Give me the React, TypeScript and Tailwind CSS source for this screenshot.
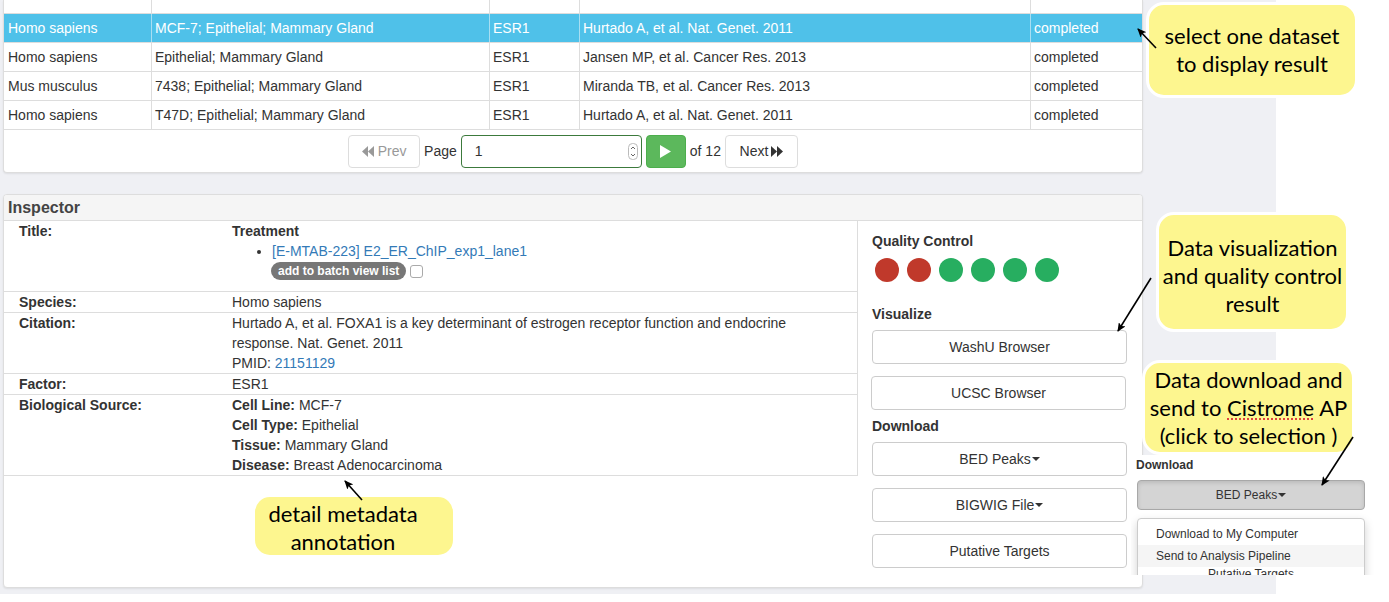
import React from "react";

type Row = { cells: string[]; selected?: boolean };

const rows: Row[] = [
  { cells: ["Homo sapiens", "MCF-7; Epithelial; Mammary Gland", "ESR1", "Hurtado A, et al. Nat. Genet. 2011", "completed"], selected: true },
  { cells: ["Homo sapiens", "Epithelial; Mammary Gland", "ESR1", "Jansen MP, et al. Cancer Res. 2013", "completed"] },
  { cells: ["Mus musculus", "7438; Epithelial; Mammary Gland", "ESR1", "Miranda TB, et al. Cancer Res. 2013", "completed"] },
  { cells: ["Homo sapiens", "T47D; Epithelial; Mammary Gland", "ESR1", "Hurtado A, et al. Nat. Genet. 2011", "completed"] },
];

const gridCols = "grid grid-cols-[147px_338px_90px_451px_112px]";

function Caret() {
  return (
    <span className="inline-block w-0 h-0 ml-[1px] align-middle border-x-[4px] border-x-transparent border-t-[4px] border-t-[#333]" />
  );
}

function Backward({ color }: { color: string }) {
  return (
    <svg width="12" height="11" viewBox="0 0 12 11" className="inline-block">
      <polygon points="6,0 0,5.5 6,11" fill={color} />
      <polygon points="12,0 6,5.5 12,11" fill={color} />
    </svg>
  );
}

function Forward({ color }: { color: string }) {
  return (
    <svg width="12" height="11" viewBox="0 0 12 11" className="inline-block">
      <polygon points="0,0 6,5.5 0,11" fill={color} />
      <polygon points="6,0 12,5.5 6,11" fill={color} />
    </svg>
  );
}

function Callout({ className, children }: { className: string; children: React.ReactNode }) {
  return (
    <div
      className={
        "absolute flex flex-col justify-center text-center bg-[#fdf68f] border-[3px] border-white rounded-[18px] text-black text-[22px] leading-[28px] font-['Lato','Open_Sans',sans-serif] " +
        className
      }
    >
      {children}
    </div>
  );
}

export default function App() {
  return (
    <div className="relative w-[1389px] h-[602px] overflow-hidden bg-white font-['Liberation_Sans',Arial,sans-serif] text-[14px] text-[#333]">
      <div className="w-[1276px] h-[594px] bg-[#eff0f4] pl-[3px] flex flex-col">
        {/* Dataset table panel */}
        <div className="w-[1140px] bg-white border-x border-b border-[#ddd] rounded-b-[4px] shadow-[0_1px_2px_rgba(0,0,0,0.08)]">
          <div className={gridCols + " h-[14px] border-b border-[#ddd]"}>
            <div />
            <div className="border-l border-[#ddd]" />
            <div className="border-l border-[#ddd]" />
            <div className="border-l border-[#ddd]" />
            <div className="border-l border-[#ddd]" />
          </div>
          {rows.map((r, ri) => (
            <div
              key={ri}
              className={
                gridCols +
                " h-[29px] border-b border-[#ddd] " +
                (r.selected ? "bg-[#4fc1e9] text-white" : "")
              }
            >
              {r.cells.map((c, ci) => (
                <div
                  key={ci}
                  className={
                    "flex items-center pt-[1px] whitespace-nowrap overflow-hidden " +
                    (ci === 0
                      ? "pl-[4px]"
                      : r.selected
                      ? "pl-[3px] border-l border-[#a8def2]"
                      : "pl-[3px] border-l border-[#ddd]")
                  }
                >
                  {c}
                </div>
              ))}
            </div>
          ))}
          <div className="h-[42px] pt-[1px] flex items-center justify-center gap-[4px]">
            <button className="w-[72px] h-[33px] border border-[#ddd] rounded-[4px] bg-white flex items-center justify-center gap-[4px] text-[#999]">
              <Backward color="#999" />
              <span>Prev</span>
            </button>
            <span>Page</span>
            <div className="relative w-[181px] h-[33px] border border-[#3c7a3c] rounded-[4px] flex items-center pl-[13px]">
              <span>1</span>
              <svg width="10" height="17" viewBox="0 0 10 17" className="absolute right-[3px] top-[7px]">
                <rect x="0.5" y="0.5" width="9" height="16" rx="4" fill="white" stroke="#bbb" />
                <path d="M3 6 L5 4 L7 6" fill="none" stroke="#666" strokeWidth="1" />
                <path d="M3 11 L5 13 L7 11" fill="none" stroke="#666" strokeWidth="1" />
              </svg>
            </div>
            <button className="w-[40px] h-[33px] rounded-[4px] bg-[#5cb85c] border border-[#4cae4c] flex items-center justify-center">
              <svg width="11" height="13" viewBox="0 0 11 13">
                <polygon points="0,0 11,6.5 0,13" fill="white" />
              </svg>
            </button>
            <span>of 12</span>
            <button className="w-[73px] h-[33px] border border-[#ddd] rounded-[4px] bg-white flex items-center justify-center gap-[3px] text-[#333]">
              <span>Next</span>
              <Forward color="#333" />
            </button>
          </div>
        </div>

        {/* Inspector panel */}
        <div className="mt-[21px] w-[1140px] h-[394px] bg-white border border-[#ddd] rounded-[4px] shadow-[0_1px_2px_rgba(0,0,0,0.08)] flex flex-col overflow-hidden">
          <div className="h-[26px] bg-[#f5f5f5] border-b border-[#ddd] flex items-center pl-[4px] font-bold text-[16px] text-[#444]">
            Inspector
          </div>
          <div className="flex flex-1">
            <div className="w-[854px] self-start border-r border-b border-[#ddd] leading-[20px]">
              <div className="grid grid-cols-[228px_1fr] border-b border-[#ddd] pb-[10px]">
                <div className="pl-[15px] font-bold">Title:</div>
                <div>
                  <div className="font-bold">Treatment</div>
                  <ul className="list-disc pl-[40px]">
                    <li>
                      <span className="text-[#337ab7]">[E-MTAB-223] E2_ER_ChIP_exp1_lane1</span>
                      <div className="flex items-center h-[20px] -ml-[1px]">
                        <span className="h-[18px] rounded-full bg-[#777] text-white font-bold text-[12px] leading-[18px] px-[7px]">
                          add to batch view list
                        </span>
                        <span className="ml-[4px] w-[13px] h-[13px] border border-[#aaa] rounded-[3px] bg-white" />
                      </div>
                    </li>
                  </ul>
                </div>
              </div>
              <div className="grid grid-cols-[228px_1fr] border-b border-[#ddd]">
                <div className="pl-[15px] font-bold">Species:</div>
                <div>Homo sapiens</div>
              </div>
              <div className="grid grid-cols-[228px_1fr] border-b border-[#ddd]">
                <div className="pl-[15px] font-bold">Citation:</div>
                <div>
                  Hurtado A, et al. FOXA1 is a key determinant of estrogen receptor function and endocrine
                  <br />
                  response. Nat. Genet. 2011
                  <br />
                  PMID: <span className="text-[#337ab7]">21151129</span>
                </div>
              </div>
              <div className="grid grid-cols-[228px_1fr] border-b border-[#ddd]">
                <div className="pl-[15px] font-bold">Factor:</div>
                <div>ESR1</div>
              </div>
              <div className="grid grid-cols-[228px_1fr]">
                <div className="pl-[15px] font-bold">Biological Source:</div>
                <div>
                  <div>
                    <b>Cell Line:</b> MCF-7
                  </div>
                  <div>
                    <b>Cell Type:</b> Epithelial
                  </div>
                  <div>
                    <b>Tissue:</b> Mammary Gland
                  </div>
                  <div>
                    <b>Disease:</b> Breast Adenocarcinoma
                  </div>
                </div>
              </div>
            </div>
            <div className="flex-1 pl-[14px] pt-[10px] leading-[20px]">
              <div className="font-bold">Quality Control</div>
              <div className="mt-[7px] ml-[3px] flex gap-[8px]">
                <span className="w-[24px] h-[24px] rounded-full bg-[#c0392b]" />
                <span className="w-[24px] h-[24px] rounded-full bg-[#c0392b]" />
                <span className="w-[24px] h-[24px] rounded-full bg-[#27ae60]" />
                <span className="w-[24px] h-[24px] rounded-full bg-[#27ae60]" />
                <span className="w-[24px] h-[24px] rounded-full bg-[#27ae60]" />
                <span className="w-[24px] h-[24px] rounded-full bg-[#27ae60]" />
              </div>
              <div className="mt-[22px] font-bold">Visualize</div>
              <div className="mt-[6px] w-[255px] h-[34px] border border-[#ccc] rounded-[4px] flex items-center justify-center">
                WashU Browser
              </div>
              <div className="mt-[12px] -ml-[1px] w-[255px] h-[34px] border border-[#ccc] rounded-[4px] flex items-center justify-center">
                UCSC Browser
              </div>
              <div className="mt-[6px] font-bold">Download</div>
              <div className="mt-[6px] w-[255px] h-[34px] border border-[#ccc] rounded-[4px] flex items-center justify-center">
                BED Peaks
                <Caret />
              </div>
              <div className="mt-[12px] w-[255px] h-[34px] border border-[#ccc] rounded-[4px] flex items-center justify-center">
                BIGWIG File
                <Caret />
              </div>
              <div className="mt-[12px] w-[255px] h-[34px] border border-[#ccc] rounded-[4px] flex items-center justify-center">
                Putative Targets
              </div>
            </div>
          </div>
        </div>
      </div>

      {/* Pasted snippet: download dropdown */}
      <div className="absolute left-[1131px] top-[455px] w-[258px] h-[120px] bg-white text-[12px] overflow-hidden">
        <div className="pl-[5px] h-[20px] leading-[20px] font-bold">Download</div>
        <div className="mt-[5px] ml-[6px] w-[228px] h-[30px] rounded-[4px] bg-[#d4d4d4] border border-[#a8a8a8] shadow-[inset_0_2px_4px_rgba(0,0,0,0.12)] flex items-center justify-center">
          BED Peaks
          <Caret />
        </div>
        <div className="mt-[8px] ml-[6px] w-[228px] h-[60px] bg-white border border-[#ccc] rounded-t-[4px] shadow-[0_4px_10px_rgba(0,0,0,0.18)] pt-[4px]">
          <div className="h-[22px] leading-[22px] pl-[18px]">Download to My Computer</div>
          <div className="h-[22px] leading-[22px] pl-[18px] bg-[#f5f5f5]">Send to Analysis Pipeline</div>
          <div className="h-[8px] overflow-hidden text-center text-[12px] leading-[12px] pt-[1px]">
            Putative Targets
          </div>
        </div>
      </div>

      {/* Callouts */}
      <Callout className="left-[1146px] top-[2px] w-[212px] h-[96px]">
        <div>select one dataset</div>
        <div>to display result</div>
      </Callout>
      <Callout className="left-[1156px] top-[212px] w-[193px] h-[120px] pt-[8px]">
        <div>Data visualization</div>
        <div>and quality control</div>
        <div>result</div>
      </Callout>
      <Callout className="left-[1142px] top-[360px] w-[213px] h-[95px]">
        <div>Data download and</div>
        <div>
          send to{" "}
          <span className="underline decoration-dotted decoration-[#e04040] decoration-[1.5px] underline-offset-[3px]">
            Cistrome
          </span>{" "}
          AP
        </div>
        <div>(click to selection )</div>
      </Callout>
      <Callout className="left-[252px] top-[494px] w-[204px] h-[64px] pr-[22px] pt-[4px]">
        <div>detail metadata</div>
        <div>annotation</div>
      </Callout>

      {/* Arrows */}
      <svg className="absolute left-0 top-0 pointer-events-none" width="1389" height="602" viewBox="0 0 1389 602">
        <defs>
          <marker id="ah" markerWidth="9" markerHeight="8" refX="8" refY="4" orient="auto" markerUnits="userSpaceOnUse">
            <path d="M0,0 L9,4 L0,8 L2,4 z" fill="#000" />
          </marker>
        </defs>
        <line x1="1156" y1="48" x2="1138" y2="29" stroke="#000" strokeWidth="1.6" markerEnd="url(#ah)" />
        <line x1="1151" y1="278" x2="1118" y2="331" stroke="#000" strokeWidth="1.6" markerEnd="url(#ah)" />
        <line x1="1353" y1="437" x2="1322" y2="485" stroke="#000" strokeWidth="1.6" markerEnd="url(#ah)" />
        <line x1="362" y1="500" x2="345" y2="481" stroke="#000" strokeWidth="1.6" markerEnd="url(#ah)" />
      </svg>
    </div>
  );
}
